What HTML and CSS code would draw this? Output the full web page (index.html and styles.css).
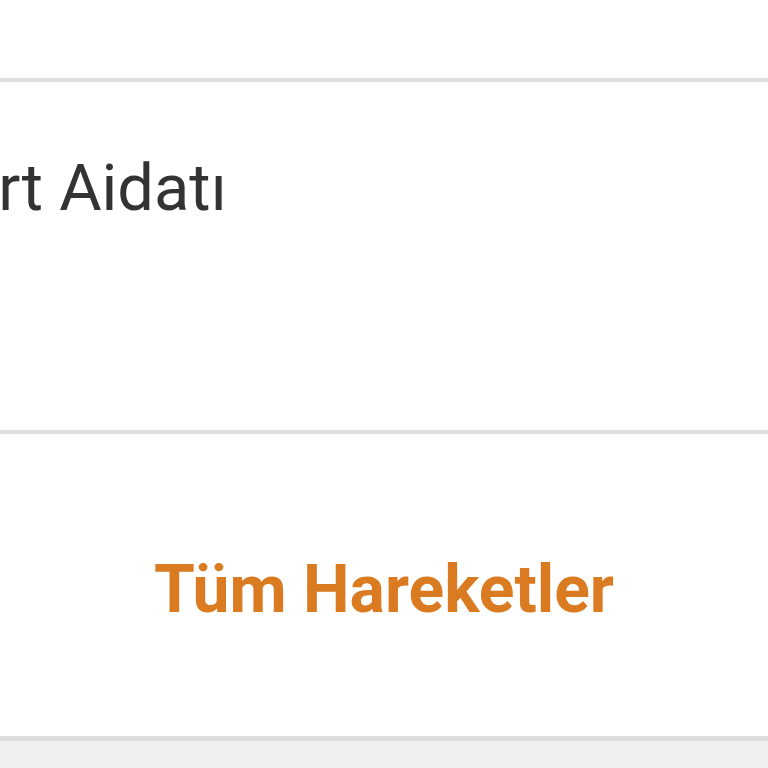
FILE: index.html
```html
<!DOCTYPE html>
<html lang="tr">
<head>
<meta charset="utf-8">
<link rel="stylesheet" href="styles.css">
</head>
<body>
<div class="screen">
  <div class="top"></div>
  <div class="item">
    <div class="item-title">Kart Aidatı</div>
  </div>
  <div class="footer">
    <a class="all-link">Tüm Hareketler</a>
  </div>
  <div class="bottom"></div>
</div>
</body>
</html>
```
FILE: styles.css
```css
html, body {
  margin: 0;
  padding: 0;
  background: #ffffff;
}
.screen {
  width: 768px;
  height: 768px;
  overflow: hidden;
  display: flex;
  flex-direction: column;
  font-family: Roboto, "Liberation Sans", sans-serif;
}
.top {
  height: 78px;
  flex: none;
  border-bottom: 4px solid #dcdcdc;
}
.item {
  height: 348px;
  flex: none;
  border-bottom: 4px solid #dcdcdc;
  overflow: hidden;
  box-sizing: content-box;
}
.item-title {
  padding-top: 66px;
  font-size: 65px;
  line-height: 80px;
  color: #333333;
  margin-left: -78px;
  white-space: nowrap;
}
.footer {
  height: 302px;
  flex: none;
  display: flex;
  align-items: center;
  justify-content: center;
  border-bottom: 5px solid #dddcda;
}
.all-link {
  font-size: 66px;
  font-weight: 700;
  color: #da7b22;
  line-height: 80px;
  padding-top: 10px;
}
.bottom {
  flex: 1;
  background: #f0efed;
}
```
